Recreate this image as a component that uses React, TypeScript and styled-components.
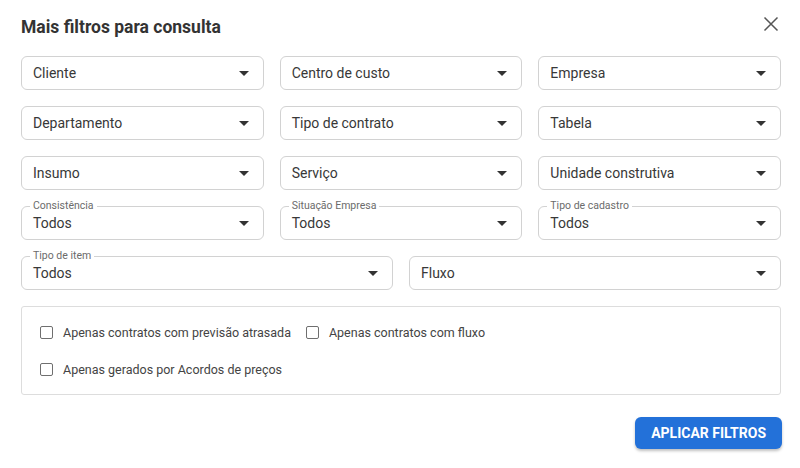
import React, {FC} from 'react';
import styled, {createGlobalStyle} from "styled-components";

const GlobalStyle = createGlobalStyle`
    body {
        margin: 0;
        background: #ffffff;
        font-family: Roboto, "Liberation Sans", Arial, sans-serif;
    }
`

const Dialog = styled.div`
    width: 800px;
    height: 468px;
    box-sizing: border-box;
    padding: 13px 19px 0 21px;
    background: #ffffff;
    display: flex;
    flex-direction: column;
`

const Header = styled.div`
    display: flex;
    align-items: center;
    justify-content: space-between;
    height: 28px;
    margin-bottom: 15px;
`

const Title = styled.h2`
    margin: 0;
    font-size: 17.5px;
    font-weight: 700;
    color: #333333;
`

const CloseButton = styled.button`
    border: none;
    background: none;
    padding: 0;
    width: 22px;
    height: 22px;
    margin-right: -1px;
    margin-top: -6px;
    display: flex;
    align-items: center;
    justify-content: center;
    cursor: pointer;
`

const FieldGrid = styled.div`
    display: grid;
    grid-template-columns: repeat(6, 1fr);
    grid-auto-rows: 34px;
    column-gap: 16px;
    row-gap: 16px;
    width: 760px;
`

const Field = styled.div<{ $span: number }>`
    grid-column: span ${p => p.$span};
    position: relative;
    height: 34px;
    box-sizing: border-box;
    border: 1px solid #d2d2d2;
    border-radius: 6px;
    display: flex;
    align-items: center;
    padding: 0 14px 0 11px;
`

const FieldValue = styled.span`
    flex: 1;
    font-size: 14px;
    color: #383838;
`

const FieldLabel = styled.span`
    position: absolute;
    top: -7px;
    left: 8px;
    padding: 0 3px;
    background: #ffffff;
    font-size: 10.5px;
    color: #6b6b6b;
    line-height: 12px;
`

const Arrow = styled.span`
    width: 0;
    height: 0;
    border-left: 5px solid transparent;
    border-right: 5px solid transparent;
    border-top: 5px solid #333333;
`

const OptionsPanel = styled.div`
    margin-top: 16px;
    width: 760px;
    height: 89px;
    box-sizing: border-box;
    border: 1px solid #dddddd;
    border-radius: 3px;
    padding: 15px 18px;
    display: flex;
    flex-direction: column;
    gap: 17px;
`

const OptionsRow = styled.div`
    display: flex;
    gap: 15px;
`

const CheckLabel = styled.label`
    display: flex;
    align-items: center;
    gap: 10px;
    height: 20px;
    font-size: 12.5px;
    color: #444444;
    cursor: pointer;
`

const CheckBox = styled.span`
    width: 13px;
    height: 13px;
    box-sizing: border-box;
    border: 1.5px solid #6f6f6f;
    border-radius: 2px;
`

const Footer = styled.div`
    display: flex;
    justify-content: flex-end;
    width: 760px;
    margin-top: 22px;
`

const ApplyButton = styled.button`
    height: 32px;
    padding: 0 16px;
    margin-right: -1px;
    border: none;
    border-radius: 6px;
    background: #2371d9;
    color: #ffffff;
    font-family: Roboto, "Liberation Sans", Arial, sans-serif;
    font-size: 14px;
    font-weight: 700;
    box-shadow: 0 2px 3px rgba(0, 0, 0, 0.25);
    cursor: pointer;
`

type FieldDef = { label?: string; value: string; span: number };

const fields: FieldDef[] = [
    {value: 'Cliente', span: 2},
    {value: 'Centro de custo', span: 2},
    {value: 'Empresa', span: 2},
    {value: 'Departamento', span: 2},
    {value: 'Tipo de contrato', span: 2},
    {value: 'Tabela', span: 2},
    {value: 'Insumo', span: 2},
    {value: 'Serviço', span: 2},
    {value: 'Unidade construtiva', span: 2},
    {label: 'Consistência', value: 'Todos', span: 2},
    {label: 'Situação Empresa', value: 'Todos', span: 2},
    {label: 'Tipo de cadastro', value: 'Todos', span: 2},
    {label: 'Tipo de item', value: 'Todos', span: 3},
    {value: 'Fluxo', span: 3},
];

const Check: FC<{ text: string }> = ({text}) => (
    <CheckLabel>
        <CheckBox/>
        {text}
    </CheckLabel>
);

const App: FC = () => (
    <>
        <GlobalStyle/>
        <Dialog>
            <Header>
                <Title>Mais filtros para consulta</Title>
                <CloseButton aria-label="Fechar">
                    <svg width="16" height="16" viewBox="0 0 16 16">
                        <path d="M1.5 1.5 L14.5 14.5 M14.5 1.5 L1.5 14.5" stroke="#555" strokeWidth="1.5"
                              fill="none"/>
                    </svg>
                </CloseButton>
            </Header>
            <FieldGrid>
                {fields.map((f, i) => (
                    <Field key={i} $span={f.span}>
                        {f.label && <FieldLabel>{f.label}</FieldLabel>}
                        <FieldValue>{f.value}</FieldValue>
                        <Arrow/>
                    </Field>
                ))}
            </FieldGrid>
            <OptionsPanel>
                <OptionsRow>
                    <Check text="Apenas contratos com previsão atrasada"/>
                    <Check text="Apenas contratos com fluxo"/>
                </OptionsRow>
                <OptionsRow>
                    <Check text="Apenas gerados por Acordos de preços"/>
                </OptionsRow>
            </OptionsPanel>
            <Footer>
                <ApplyButton>APLICAR FILTROS</ApplyButton>
            </Footer>
        </Dialog>
    </>
);

export default App;
